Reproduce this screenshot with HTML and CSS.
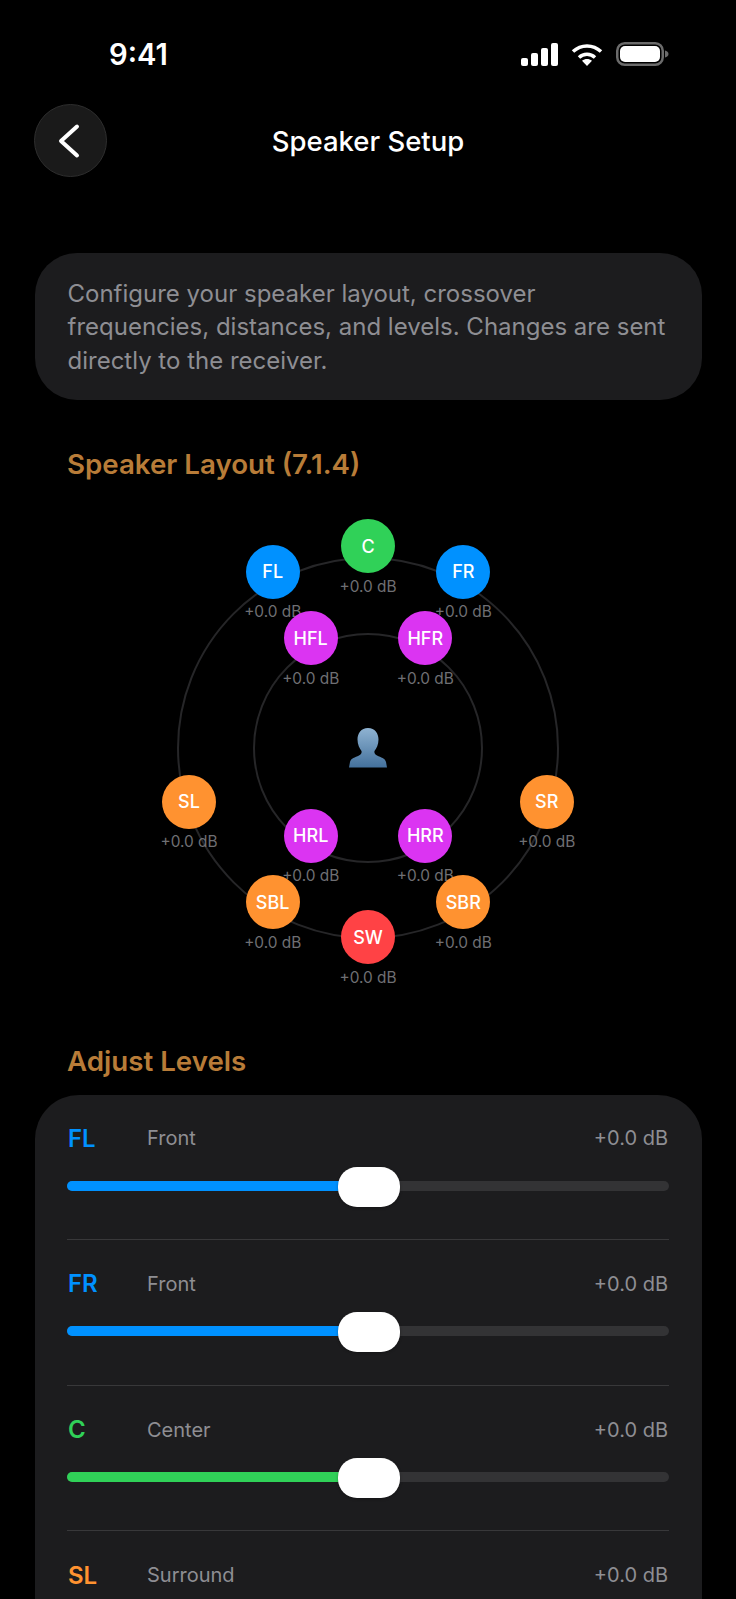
FILE: index.html
```html
<!DOCTYPE html>
<html lang="en">

<head>
    <meta charset="UTF-8">
    <title>Speaker Setup</title>
    <link rel="stylesheet" href="styles.css">
</head>

<body>
    <div class="status">
        <span class="time">9:41</span>
        <div class="status-icons">
            <svg class="signal" width="37" height="23" viewBox="0 0 37 23">
                <rect x="0" y="15" width="7" height="8" rx="2" />
                <rect x="10" y="10" width="7" height="13" rx="2" />
                <rect x="20" y="5" width="7" height="18" rx="2" />
                <rect x="30" y="0" width="7" height="23" rx="2" />
            </svg>
            <svg class="wifi" width="32" height="23" viewBox="0 0 32 23">
                <path d="M2 8.5C10 1 22 1 30 8.5" />
                <path d="M8 14.5C12.5 10.3 19.5 10.3 24 14.5" />
                <path class="wifi-dot" d="M16 23L11 17.8C14 15.3 18 15.3 21 17.8Z" />
            </svg>
            <svg class="battery" width="53" height="24" viewBox="0 0 53 24">
                <rect class="battery-edge" x="1.25" y="1.25" width="45.5" height="21.5" rx="7.5" />
                <rect class="battery-fill" x="4" y="4" width="40" height="16" rx="5" />
                <path class="battery-nub" d="M49 8.5C51 9 52.5 10.3 52.5 12C52.5 13.7 51 15 49 15.5Z" />
            </svg>
        </div>
    </div>

    <div class="nav">
        <button class="back">
            <svg width="24" height="36" viewBox="0 0 24 36">
                <path d="M20 3.5L4 18L20 32.5" />
            </svg>
        </button>
        <h1>Speaker Setup</h1>
    </div>

    <div class="card intro">
        Configure your speaker layout, crossover frequencies, distances, and levels. Changes are sent directly to the receiver.
    </div>

    <h2 class="section-title first">Speaker Layout (7.1.4)</h2>

    <div class="stage">
        <div class="ring outer"></div>
        <div class="ring inner"></div>

        <svg class="listener" width="38" height="40" viewBox="0 0 38 40">
            <defs>
                <linearGradient id="bust" x1="0" y1="0" x2="0" y2="1">
                    <stop offset="0" stop-color="#8fb3d2" />
                    <stop offset="1" stop-color="#44719c" />
                </linearGradient>
            </defs>
            <path fill="url(#bust)" d="M19 0C26 0 29.5 5.5 29.5 11.5C29.5 16.5 27.5 20.5 25.5 23C25 25 26 26.5 28 27.5C32 29.5 36 30 37 34L38 39.5H0L1 34C2 30 6 29.5 10 27.5C12 26.5 13 25 12.5 23C10.5 20.5 8.5 16.5 8.5 11.5C8.5 5.5 12 0 19 0Z" />
        </svg>

        <div class="node pos-fl"><span class="dot blue">FL</span><span class="node-db">+0.0 dB</span></div>
        <div class="node pos-fr"><span class="dot blue">FR</span><span class="node-db">+0.0 dB</span></div>
        <div class="node pos-c"><span class="dot green">C</span><span class="node-db">+0.0 dB</span></div>
        <div class="node pos-hfl"><span class="dot purple">HFL</span><span class="node-db">+0.0 dB</span></div>
        <div class="node pos-hfr"><span class="dot purple">HFR</span><span class="node-db">+0.0 dB</span></div>
        <div class="node pos-hrl"><span class="dot purple">HRL</span><span class="node-db">+0.0 dB</span></div>
        <div class="node pos-hrr"><span class="dot purple">HRR</span><span class="node-db">+0.0 dB</span></div>
        <div class="node pos-sl"><span class="dot orange">SL</span><span class="node-db">+0.0 dB</span></div>
        <div class="node pos-sr"><span class="dot orange">SR</span><span class="node-db">+0.0 dB</span></div>
        <div class="node pos-sbl"><span class="dot orange">SBL</span><span class="node-db">+0.0 dB</span></div>
        <div class="node pos-sbr"><span class="dot orange">SBR</span><span class="node-db">+0.0 dB</span></div>
        <div class="node pos-sw"><span class="dot red">SW</span><span class="node-db">+0.0 dB</span></div>
    </div>

    <h2 class="section-title">Adjust Levels</h2>

    <div class="card levels">
        <div class="level">
            <div class="level-head">
                <span class="code text-blue">FL</span>
                <span class="desc">Front</span>
                <span class="value">+0.0 dB</span>
            </div>
            <div class="slider">
                <div class="fill blue" style="width: 50%"></div>
                <div class="thumb" style="left: 50%"></div>
            </div>
        </div>
        <div class="level">
            <div class="level-head">
                <span class="code text-blue">FR</span>
                <span class="desc">Front</span>
                <span class="value">+0.0 dB</span>
            </div>
            <div class="slider">
                <div class="fill blue" style="width: 50%"></div>
                <div class="thumb" style="left: 50%"></div>
            </div>
        </div>
        <div class="level">
            <div class="level-head">
                <span class="code text-green">C</span>
                <span class="desc">Center</span>
                <span class="value">+0.0 dB</span>
            </div>
            <div class="slider">
                <div class="fill green" style="width: 50%"></div>
                <div class="thumb" style="left: 50%"></div>
            </div>
        </div>
        <div class="level">
            <div class="level-head">
                <span class="code text-orange">SL</span>
                <span class="desc">Surround</span>
                <span class="value">+0.0 dB</span>
            </div>
            <div class="slider">
                <div class="fill orange" style="width: 50%"></div>
                <div class="thumb" style="left: 50%"></div>
            </div>
        </div>
    </div>
</body>

</html>
```

FILE: styles.css
```css
* {
    box-sizing: border-box;
}

html,
body {
    height: 1599px;
    overflow: hidden;
}

body {
    margin: 0;
    background-color: #000;
    color: #fff;
    font-family: Inter, "Noto Sans", sans-serif;
}

.status {
    display: flex;
    justify-content: space-between;
    align-items: flex-start;
    height: 104px;
    padding: 38px 67px 0 109px;
}

.time {
    font-size: 29.2px;
    font-weight: 600;
    line-height: 34px;
}

.status-icons {
    display: flex;
    align-items: center;
    gap: 13px;
    margin-top: 4px;
}

.signal {
    fill: #fff;
}

.wifi path {
    fill: none;
    stroke: #fff;
    stroke-width: 3.5;
}

.wifi .wifi-dot {
    fill: #fff;
    stroke: none;
}

.battery-edge {
    fill: none;
    stroke: #6b6b6b;
    stroke-width: 2.5;
}

.battery-fill {
    fill: #fff;
}

.battery-nub {
    fill: #6b6b6b;
}

.nav {
    display: grid;
    grid-template-columns: 73px 1fr 73px;
    align-items: center;
    height: 73px;
    padding: 0 34px;
}

.back {
    display: flex;
    justify-content: center;
    align-items: center;
    width: 73px;
    height: 73px;
    padding: 0;
    border: 1px solid #2e2e2e;
    border-radius: 50%;
    background-color: #1a1a1a;
}

.back svg {
    margin-right: 4px;
}

.back path {
    fill: none;
    stroke: #fff;
    stroke-width: 4;
    stroke-linecap: round;
    stroke-linejoin: round;
}

h1 {
    margin: 0;
    font-size: 27.5px;
    font-weight: 500;
    line-height: 34px;
    text-align: center;
}

.card {
    margin: 0 34.5px;
    background-color: #1c1c1e;
}

.intro {
    height: 147px;
    margin-top: 76px;
    padding: 24px 33px;
    border-radius: 42px;
    color: #8e8e93;
    font-size: 24px;
    line-height: 33.4px;
}

.section-title {
    height: 34px;
    margin: 0;
    padding-left: 67px;
    color: #b87c38;
    font-size: 27.7px;
    font-weight: 600;
    line-height: 34px;
}

.section-title.first {
    margin-top: 47px;
}

.stage {
    position: relative;
    height: 554px;
    margin-top: 9px;
}

.ring {
    position: absolute;
    left: 50%;
    top: 257.5px;
    border: 2px solid #262628;
    border-radius: 50%;
    transform: translate(-50%, -50%);
}

.ring.outer {
    width: 382px;
    height: 382px;
}

.ring.inner {
    width: 230px;
    height: 230px;
}

.listener {
    position: absolute;
    left: 349px;
    top: 238px;
}

.node {
    position: absolute;
    display: flex;
    flex-direction: column;
    align-items: center;
    width: 80px;
}

.dot {
    display: flex;
    justify-content: center;
    align-items: center;
    width: 54px;
    height: 54px;
    border-radius: 50%;
    color: #fff;
    font-size: 18px;
    font-weight: 550;
}

.node-db {
    margin-top: 4.5px;
    color: #6f6f73;
    font-size: 15.4px;
    line-height: 18px;
    white-space: nowrap;
}

.blue {
    background-color: #0091ff;
}

.green {
    background-color: #30d158;
}

.purple {
    background-color: #db34f2;
}

.orange {
    background-color: #ff9230;
}

.red {
    background-color: #ff4245;
}

.text-blue {
    color: #0091ff;
}

.text-green {
    color: #30d158;
}

.text-orange {
    color: #ff9230;
}

.pos-fl { left: 232.7px; top: 54.7px; }
.pos-fr { left: 423.3px; top: 54.7px; }
.pos-c { left: 328px; top: 29.3px; }
.pos-hfl { left: 270.7px; top: 121px; }
.pos-hfr { left: 385.3px; top: 121px; }
.pos-hrl { left: 270.7px; top: 318.7px; }
.pos-hrr { left: 385.3px; top: 318.7px; }
.pos-sl { left: 149px; top: 284.7px; }
.pos-sr { left: 506.7px; top: 284.7px; }
.pos-sbl { left: 232.7px; top: 385px; }
.pos-sbr { left: 423.3px; top: 385px; }
.pos-sw { left: 328px; top: 420.3px; }

.levels {
    margin-top: 17px;
    padding: 0 32.5px;
    border-radius: 44px 44px 0 0;
}

.level {
    height: 145.8px;
    padding-top: 27px;
    border-bottom: 1px solid #38383a;
}

.level:first-child {
    height: 144.8px;
    padding-top: 26px;
}

.level-head {
    display: flex;
    align-items: center;
    height: 34px;
}

.code {
    width: 80px;
    padding-left: 1px;
    font-size: 24px;
    font-weight: 600;
}

.desc {
    color: #8e8e93;
    font-size: 20px;
}

.value {
    margin-left: auto;
    padding-right: 1px;
    color: #8e8e93;
    font-size: 20px;
}

.slider {
    position: relative;
    height: 10px;
    margin-top: 25.5px;
    border-radius: 5px;
    background-color: #333335;
}

.fill {
    height: 100%;
    border-radius: 5px;
}

.thumb {
    position: absolute;
    top: -14px;
    width: 62px;
    height: 40px;
    margin-left: -30px;
    border-radius: 19px;
    background-color: #fff;
    box-shadow: 0 1px 3px rgba(0, 0, 0, .3);
}
```
